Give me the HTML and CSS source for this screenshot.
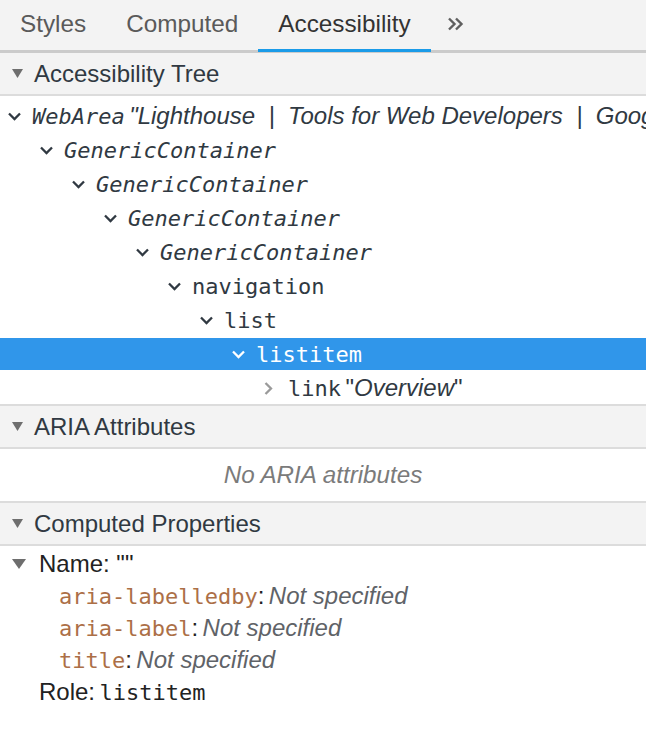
FILE: index.html
```html
<!DOCTYPE html>
<html>
<head>
<meta charset="utf-8">
<link rel="stylesheet" href="styles.css">
</head>
<body>
<div class="panel">
  <div class="tabbar">
    <div class="tab">Styles</div>
    <div class="tab">Computed</div>
    <div class="tab active">Accessibility</div>
    <div class="tab more">
      <svg width="18" height="14" viewBox="0 0 18 14"><path d="M2 1.5 L7.5 7 L2 12.5 M9 1.5 L14.5 7 L9 12.5" fill="none" stroke="#5f5f5f" stroke-width="2.4"/></svg>
    </div>
  </div>

  <div class="section-head">
    <svg class="tri" width="11" height="9" viewBox="0 0 11 9"><path d="M0 0 H11 L5.5 9 Z" fill="#6e6e6e"/></svg>
    <span>Accessibility Tree</span>
  </div>
  <div class="tree">
    <div class="row lvl0"><svg class="chev" viewBox="0 0 13 9"><path d="M1 1.5 L6.5 7 L12 1.5" /></svg><span class="mono it">WebArea</span>&nbsp;<span class="sans it">"Lighthouse&nbsp; |&nbsp; Tools for Web Developers&nbsp; |&nbsp; Google Developers"</span></div>
    <div class="row lvl1"><svg class="chev" viewBox="0 0 13 9"><path d="M1 1.5 L6.5 7 L12 1.5" /></svg><span class="mono it">GenericContainer</span></div>
    <div class="row lvl2"><svg class="chev" viewBox="0 0 13 9"><path d="M1 1.5 L6.5 7 L12 1.5" /></svg><span class="mono it">GenericContainer</span></div>
    <div class="row lvl3"><svg class="chev" viewBox="0 0 13 9"><path d="M1 1.5 L6.5 7 L12 1.5" /></svg><span class="mono it">GenericContainer</span></div>
    <div class="row lvl4"><svg class="chev" viewBox="0 0 13 9"><path d="M1 1.5 L6.5 7 L12 1.5" /></svg><span class="mono it">GenericContainer</span></div>
    <div class="row lvl5"><svg class="chev" viewBox="0 0 13 9"><path d="M1 1.5 L6.5 7 L12 1.5" /></svg><span class="mono">navigation</span></div>
    <div class="row lvl6"><svg class="chev" viewBox="0 0 13 9"><path d="M1 1.5 L6.5 7 L12 1.5" /></svg><span class="mono">list</span></div>
    <div class="row lvl7 selected"><svg class="chev" viewBox="0 0 13 9"><path d="M1 1.5 L6.5 7 L12 1.5" /></svg><span class="mono">listitem</span></div>
    <div class="row lvl8"><svg class="chev right" viewBox="0 0 9 13"><path d="M1.5 1 L7 6.5 L1.5 12" /></svg><span class="mono">link</span>&nbsp;<span class="sans">"<i>Overview</i>"</span></div>
  </div>

  <div class="section-head">
    <svg class="tri" width="11" height="9" viewBox="0 0 11 9"><path d="M0 0 H11 L5.5 9 Z" fill="#6e6e6e"/></svg>
    <span>ARIA Attributes</span>
  </div>
  <div class="empty">No ARIA attributes</div>

  <div class="section-head">
    <svg class="tri" width="11" height="9" viewBox="0 0 11 9"><path d="M0 0 H11 L5.5 9 Z" fill="#6e6e6e"/></svg>
    <span>Computed Properties</span>
  </div>
  <div class="props">
    <div class="prop top"><svg class="tri2" width="14" height="10" viewBox="0 0 14 10"><path d="M0 0 H14 L7 10 Z" fill="#6e6e6e"/></svg><span class="sans dark">Name: ""</span></div>
    <div class="prop sub"><span class="mono attr">aria-labelledby</span><span class="sans dark">:</span>&nbsp;<span class="sans it gray">Not specified</span></div>
    <div class="prop sub"><span class="mono attr">aria-label</span><span class="sans dark">:</span>&nbsp;<span class="sans it gray">Not specified</span></div>
    <div class="prop sub"><span class="mono attr">title</span><span class="sans dark">:</span>&nbsp;<span class="sans it gray">Not specified</span></div>
    <div class="prop role"><span class="sans dark">Role:</span>&nbsp;<span class="mono dark">listitem</span></div>
  </div>
</div>
</body>
</html>
```

FILE: styles.css
```css
html, body {
  margin: 0;
  padding: 0;
  background: #ffffff;
}
.panel {
  width: 646px;
  height: 730px;
  overflow: hidden;
  font-family: "Liberation Sans", Arial, sans-serif;
  color: #303942;
}
.tabbar {
  display: flex;
  align-items: stretch;
  height: 50px;
  background: #f3f3f3;
  border-bottom: 3px solid #cbcbcb;
}
.tab {
  position: relative;
  display: flex;
  align-items: center;
  padding: 0 20px;
  font-size: 24.3px;
  color: #5a5a5a;
  padding-bottom: 2px;
}
.tab.active {
  color: #333333;
}
.tab.active::after {
  content: "";
  position: absolute;
  left: 0;
  right: 0;
  bottom: -2px;
  height: 3px;
  background: #1a9be8;
}
.tab.more {
  padding-left: 16px;
}
.section-head {
  display: flex;
  align-items: center;
  height: 41px;
  background: #f3f3f3;
  border-bottom: 2px solid #dcdcdc;
  font-size: 24px;
  color: #303942;
}
.section-head .tri {
  margin-left: 12px;
  margin-right: 11px;
}
.tree {
  padding: 4px 0 0;
  border-bottom: 2px solid #dcdcdc;
  white-space: nowrap;
  overflow: hidden;
}
.row {
  display: flex;
  align-items: center;
  height: 32px;
  margin-bottom: 2px;
  color: #303942;
}
.row:last-child {
  margin-bottom: 0;
}
.row .chev {
  width: 13px;
  height: 9px;
  margin-right: 11px;
  flex: none;
}
.row .chev path {
  fill: none;
  stroke: #303942;
  stroke-width: 2.3;
}
.row .chev.right {
  width: 9px;
  height: 13px;
  margin-left: 2px;
  margin-right: 15px;
}
.row .chev.right path {
  stroke: #9a9a9a;
}
.lvl0 { padding-left: 8px; }
.lvl1 { padding-left: 40px; }
.lvl2 { padding-left: 72px; }
.lvl3 { padding-left: 104px; }
.lvl4 { padding-left: 136px; }
.lvl5 { padding-left: 168px; }
.lvl6 { padding-left: 200px; }
.lvl7 { padding-left: 232px; }
.lvl8 { padding-left: 262px; }
.row.selected {
  background: #3096ea;
  color: #ffffff;
}
.row.selected .chev path {
  stroke: #ffffff;
}
.mono {
  font-family: "DejaVu Sans Mono", "Liberation Mono", monospace;
  font-size: 22px;
}
.sans {
  font-family: "Liberation Sans", Arial, sans-serif;
  font-size: 24px;
}
.it {
  font-style: italic;
}
.empty {
  display: flex;
  align-items: center;
  justify-content: center;
  font-size: 24.2px;
  font-style: italic;
  color: #7b7b7b;
  border-bottom: 2px solid #dcdcdc;
  padding-bottom: 1px;
  box-sizing: border-box;
  height: 54px;
}
.props {
  padding-top: 2px;
}
.prop {
  display: flex;
  align-items: center;
  height: 32px;
  white-space: nowrap;
}
.prop.top {
  padding-left: 12px;
}
.prop .tri2 {
  margin-right: 13px;
}
.prop.sub {
  padding-left: 59px;
}
.prop.role {
  padding-left: 39px;
}
.dark {
  color: #222222;
}
.attr {
  color: #ac6f47;
}
.gray {
  color: #5f6368;
}
```
